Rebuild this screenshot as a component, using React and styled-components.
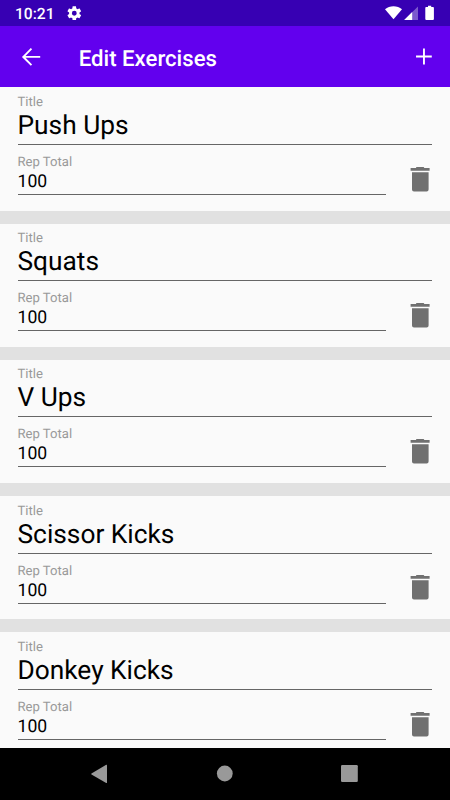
import React from "react";
import styled, { createGlobalStyle } from "styled-components";

const GlobalStyle = createGlobalStyle`
  *, *::before, *::after { box-sizing: border-box; }
  html, body { margin: 0; padding: 0; }
  body {
    font-family: Roboto, "Noto Sans", sans-serif;
    text-rendering: geometricPrecision;
    overflow: hidden;
  }
`;

const Screen = styled.div`
  width: 450px;
  height: 800px;
  display: flex;
  flex-direction: column;
  background: #fafafa;
  overflow: hidden;
`;

const StatusBar = styled.header`
  flex: none;
  height: 26px;
  padding: 0 15px;
  display: flex;
  align-items: center;
  background: #3700b3;
  color: #fff;
`;

const Clock = styled.span`
  width: 52px;
  padding-top: 2px;
  font-size: 15.6px;
  line-height: 20px;
  font-weight: 500;
`;

const StatusIcons = styled.div`
  margin-left: auto;
  display: flex;
`;

const Icon = styled.svg`
  display: block;
  flex: none;
  fill: ${(p) => p.$color || "#fff"};
`;

const AppBar = styled.div`
  flex: none;
  height: 61px;
  padding: 0 13px 0 17.5px;
  display: flex;
  align-items: center;
  background: #6200ee;
`;

const BarTitle = styled.h1`
  margin: 4px auto 0 34.9px;
  color: #fff;
  font-size: 22.2px;
  line-height: 28px;
  font-weight: 500;
`;

const IconButton = styled.button`
  flex: none;
  padding: 0;
  border: 0;
  background: transparent;
`;

const ExerciseList = styled.main`
  flex: 1;
  min-height: 0;
  padding-top: 0.4px;
  overflow: hidden;
`;

const ExerciseItem = styled.section`
  height: 136.25px;
  padding: 7.4px 17.5px 0;
  border-bottom: 13.2px solid #e1e1e1;
`;

const RepRow = styled.div`
  display: flex;
  align-items: flex-start;
  justify-content: space-between;
  margin-top: 9.8px;
`;

const Field = styled.label`
  display: block;
  width: ${(p) => p.$width};
  height: ${(p) => p.$height}px;
  border-bottom: 1px solid #666;
`;

const FieldLabel = styled.span`
  display: block;
  color: #999;
  font-size: 13.1px;
  line-height: 16px;
`;

const FieldValue = styled.span`
  display: block;
  color: #000;
  font-size: ${(p) => (p.$large ? 26.3 : 17.6)}px;
  line-height: ${(p) => (p.$large ? 31 : 23)}px;
`;

const DeleteButton = styled(IconButton)`
  margin: 9.9px -1.5px 0 0;
`;

const NavBar = styled.nav`
  flex: none;
  height: 52px;
  padding: 0 87px 0 86px;
  display: flex;
  align-items: center;
  justify-content: space-between;
  background: #000;
`;

const exercises = ["Push Ups", "Squats", "V Ups", "Scissor Kicks", "Donkey Kicks"];

function Exercise({ title }) {
  return (
    <ExerciseItem>
      <Field $width="414.5px" $height={50.2}>
        <FieldLabel>Title</FieldLabel>
        <FieldValue $large>{title}</FieldValue>
      </Field>
      <RepRow>
        <Field $width="368.5px" $height={40.2}>
          <FieldLabel>Rep Total</FieldLabel>
          <FieldValue>100</FieldValue>
        </Field>
        <DeleteButton aria-label="Delete exercise">
          <Icon $color="#707070" width="27" height="27" viewBox="0 0 27 27">
            <path d="M9 2.7q0-.8.8-.8h6.6q.8 0 .8.8V3.1h5.4v2.6H3.6V3.1H9zM5 7.2h16.6V24.4a2 2 0 0 1-2 2H7a2 2 0 0 1-2-2z" />
          </Icon>
        </DeleteButton>
      </RepRow>
    </ExerciseItem>
  );
}

export default function App() {
  return (
    <>
      <GlobalStyle />
      <Screen>
        <StatusBar>
          <Clock>10:21</Clock>
          <Icon width="14.6" height="14.6" viewBox="1.5 1.5 21 21">
            <path d="M19.43 12.98c.04-.32.07-.64.07-.98s-.03-.66-.07-.98l2.11-1.65c.19-.15.24-.42.12-.64l-2-3.46c-.12-.22-.39-.3-.61-.22l-2.49 1c-.52-.4-1.08-.73-1.69-.98l-.38-2.65C14.46 2.18 14.25 2 14 2h-4c-.25 0-.46.18-.49.42l-.38 2.65c-.61.25-1.17.59-1.69.98l-2.49-1c-.23-.09-.49 0-.61.22l-2 3.46c-.13.22-.07.49.12.64l2.11 1.65c-.04.32-.07.65-.07.98s.03.66.07.98l-2.11 1.65c-.19.15-.24.42-.12.64l2 3.46c.12.22.39.3.61.22l2.49-1c.52.4 1.08.73 1.69.98l.38 2.65c.03.24.24.42.49.42h4c.25 0 .46-.18.49-.42l.38-2.65c.61-.25 1.17-.59 1.69-.98l2.49 1c.23.09.49 0 .61-.22l2-3.46c.12-.22.07-.49-.12-.64zM12 15.5a3.5 3.5 0 1 1 0-7 3.5 3.5 0 0 1 0 7z" />
          </Icon>
          <StatusIcons>
            <Icon width="50" height="16" viewBox="0 0 50 16">
              <path d="M0 4.3C4.6.2 12.4.2 17 4.3L8.5 14.2z" />
              <path d="M33 1.4V15H19.2z" opacity=".35" />
              <path d="M27.2 7.1V15h-8z" />
              <path d="M43 .7h3.2v1.4h1.9q.8 0 .8.8V14q0 1-1 1h-6.6q-1 0-1-1V2.9q0-.8.8-.8H43z" />
            </Icon>
          </StatusIcons>
        </StatusBar>
        <AppBar>
          <IconButton aria-label="Back">
            <Icon width="26.25" height="26.25" viewBox="0 0 24 24">
              <path d="M20.3 11.8H6.9l6-6-1.2-1.2-8.1 8.1 8.1 8.1 1.2-1.2-6-6.1h13.4z" />
            </Icon>
          </IconButton>
          <BarTitle>Edit Exercises</BarTitle>
          <IconButton aria-label="Add exercise">
            <Icon width="26.25" height="26.25" viewBox="0 0 24 24">
              <path d="M19 13.2h-6.3v6.4H11v-6.4H4.6v-1.7H11V5.1h1.7v6.4H19z" />
            </Icon>
          </IconButton>
        </AppBar>
        <ExerciseList>
          {exercises.map((title) => (
            <Exercise key={title} title={title} />
          ))}
        </ExerciseList>
        <NavBar>
          <IconButton aria-label="Navigate back">
            <Icon $color="#999" width="26" height="26" viewBox="0 0 26 26">
              <path d="M21 4.3v17.2q0 .9-.8.5L5.5 13.4q-.7-.5 0-1L20.2 3.8q.8-.4.8.5z" />
            </Icon>
          </IconButton>
          <IconButton aria-label="Home">
            <Icon $color="#999" width="26" height="26" viewBox="0 0 26 26">
              <circle cx="12.8" cy="12.5" r="7.9" />
            </Icon>
          </IconButton>
          <IconButton aria-label="Recent apps">
            <Icon $color="#999" width="26" height="26" viewBox="0 0 26 26">
              <rect x="4" y="4.1" width="16.8" height="16.8" rx="1.2" />
            </Icon>
          </IconButton>
        </NavBar>
      </Screen>
    </>
  );
}
